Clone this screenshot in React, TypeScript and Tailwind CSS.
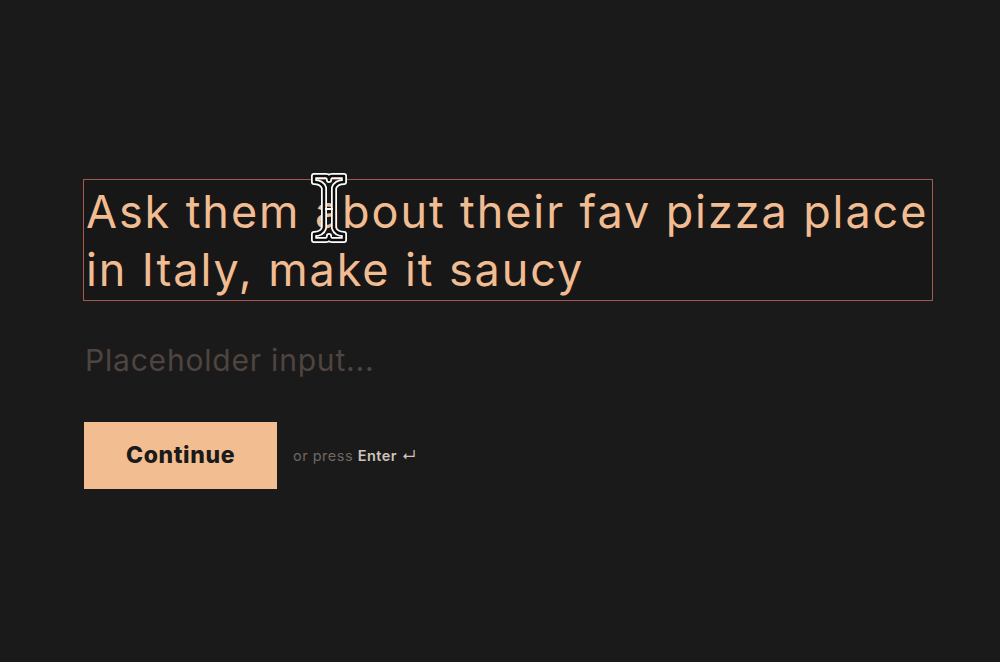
import React from "react";

const beam =
  "M3 3 H15 Q18 3 18 7 Q18 3 21 3 H33 V9 Q25 9 23 15 V55 Q25 61 33 61 V67 H21 Q18 67 18 63 Q18 67 15 67 H3 V61 Q11 61 13 55 V15 Q11 9 3 9 Z";

function Cursor() {
  return (
    <svg
      className="absolute left-[311px] top-[173px] pointer-events-none"
      width="36"
      height="70"
      viewBox="0 0 36 70"
    >
      <path d={beam} fill="none" stroke="#ffffff" strokeWidth="6" strokeLinejoin="round" />
      <path d={beam} fill="none" stroke="#0c0c0c" strokeWidth="2.5" strokeLinejoin="round" />
      <path d="M14 36 H22" stroke="#ffffff" strokeWidth="2" />
    </svg>
  );
}

export default function App() {
  return (
    <div
      className="relative min-h-screen w-full bg-[#1b1a1a] pl-[83px] pr-[68px] pt-[179px]"
      style={{ fontFamily: "Inter, 'Open Sans', sans-serif" }}
    >
      <div className="w-[850px] border border-[#a0594c] bg-[#181717] px-[2px] pt-[3px] pb-[1px]">
        <p className="text-[45px] leading-[58px] text-[#f1bc91] tracking-[1.9px]">
          Ask them about their fav pizza place
          <br />
          in Italy, make it saucy
        </p>
      </div>

      <div className="mt-[41px] pl-[2px] text-[30px] leading-[36px] tracking-[0.8px] text-[#4e4440]">
        Placeholder input...
      </div>

      <div className="mt-[44px] flex items-center gap-[16px] pl-[1px]">
        <button className="h-[67px] w-[193px] bg-[#f2bd91] text-[23px] font-extrabold tracking-[0.6px] text-[#1b1a1a]">
          Continue
        </button>
        <span className="text-[14.5px] tracking-[0.5px] text-[#6f6763]">
          or press <span className="font-semibold text-[#cfc4bd]">Enter</span>{" "}
          <span className="text-[#cfc4bd]">↵</span>
        </span>
      </div>

      <Cursor />
    </div>
  );
}
